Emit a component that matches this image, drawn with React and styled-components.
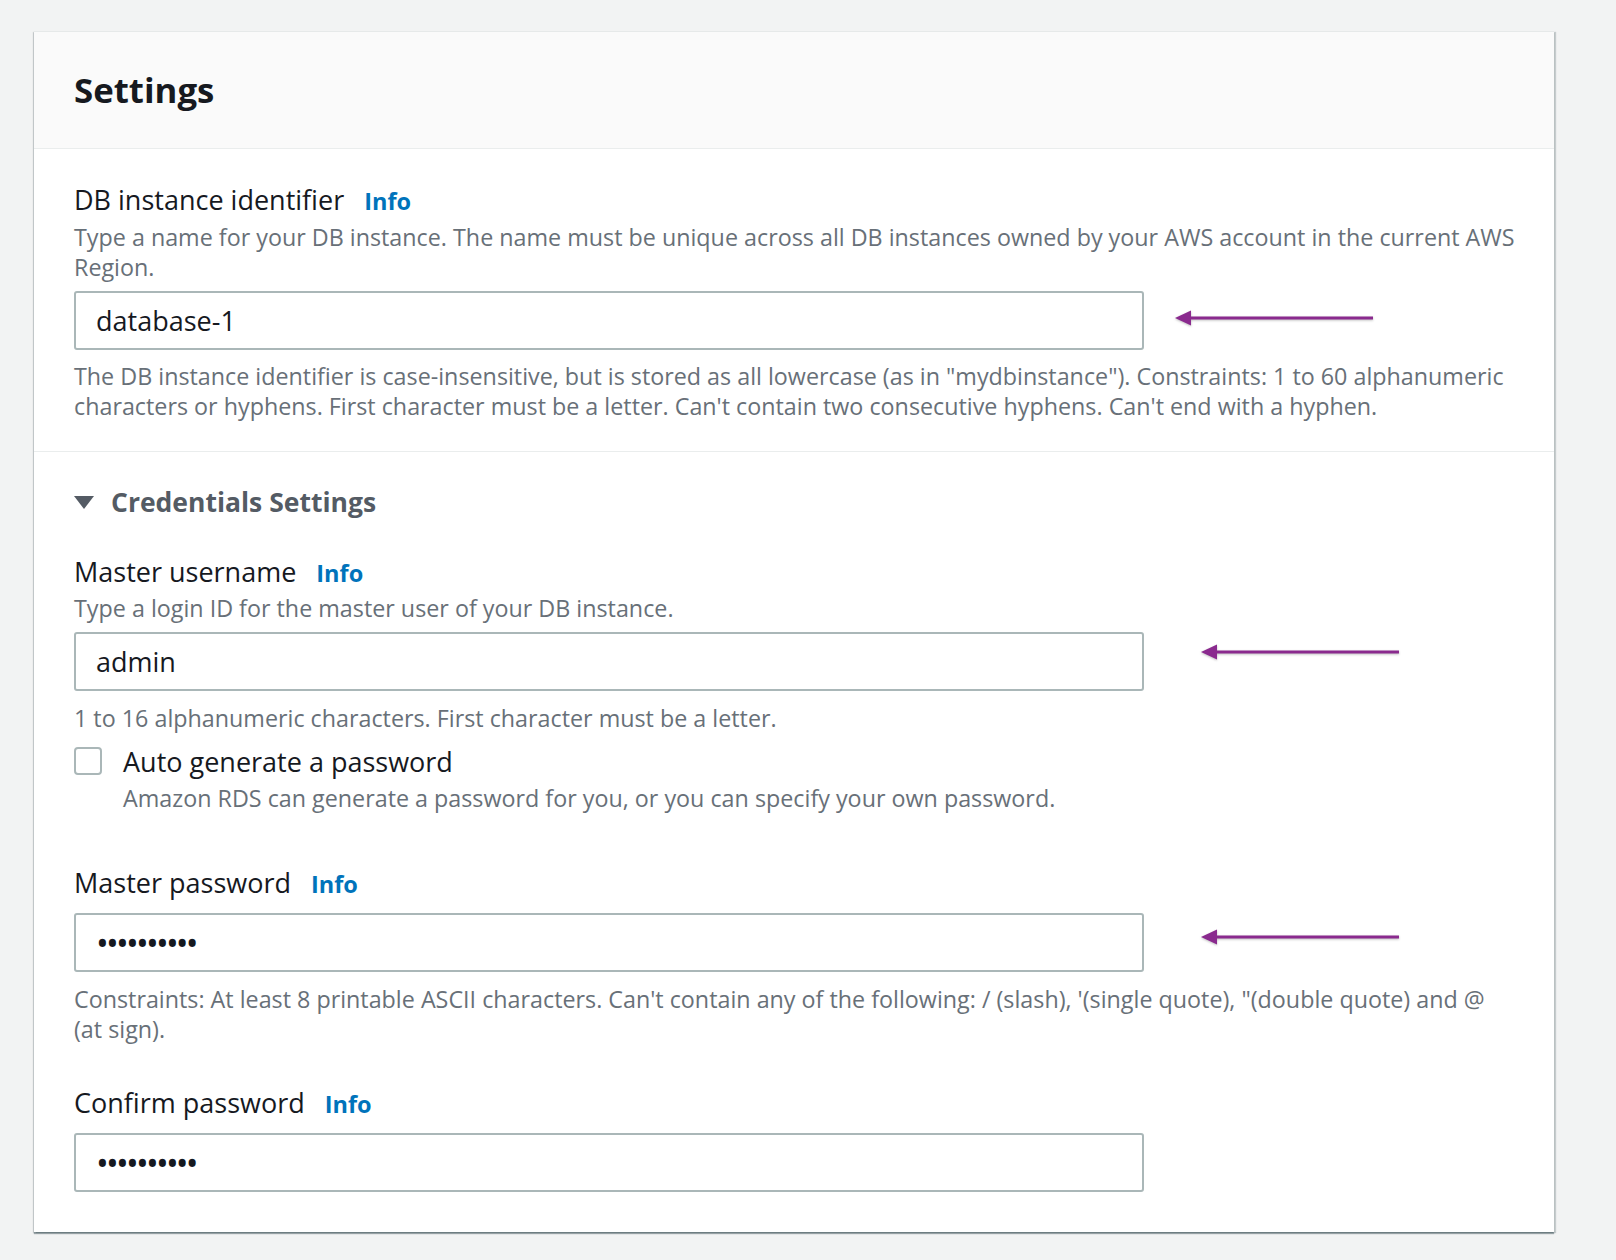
import React from "react"
import styled, { createGlobalStyle } from "styled-components"

const GlobalStyle = createGlobalStyle`
  body {
    margin: 0;
    background: #f2f3f3;
    font-family: "Open Sans", "Noto Sans", sans-serif;
    color: #16191f;
  }
`

const Arrow = ({ left, lift }) => (
  <ArrowSvg width="200" height="20" viewBox="0 0 200 20" $left={left} $lift={lift}>
    <line x1="13" y1="10" x2="198" y2="10" stroke="#8a2a8e" strokeWidth="3" />
    <polygon points="0,10 16,2.5 16,17.5" fill="#8a2a8e" />
  </ArrowSvg>
)

const Field = ({ label, description, value, hint, arrow, secret, mt }) => (
  <React.Fragment>
    <LabelRow $mt={mt}>
      <Label>{label}</Label>
      <Info href="#">Info</Info>
    </LabelRow>
    {description && <Description $mt={3}>{description}</Description>}
    <InputRow $mt={description ? 9 : 12}>
      <Input readOnly value={value} $secret={secret} />
      {arrow && <Arrow left={arrow.left} lift={arrow.lift} />}
    </InputRow>
    {hint && <Description $mt={12}>{hint}</Description>}
  </React.Fragment>
)

const App = () => (
  <React.Fragment>
    <GlobalStyle />
    <Page>
      <Card>
        <Header>
          <Title>Settings</Title>
        </Header>

        <Section $pad="34px 31px 30px 40px" $divider>
          <LabelRow>
            <Label>DB instance identifier</Label>
            <Info href="#">Info</Info>
          </LabelRow>
          <Description $mt={4}>
            Type a name for your DB instance. The name must be unique across all DB instances owned by your AWS
            account in the current AWS Region.
          </Description>
          <InputRow $mt={9}>
            <Input readOnly value="database-1" />
            <Arrow left={31} lift={6} />
          </InputRow>
          <Description $mt={11}>
            The DB instance identifier is case-insensitive, but is stored as all lowercase (as in "mydbinstance").
            Constraints: 1 to 60 alphanumeric characters or hyphens. First character must be a letter. Can't
            contain two consecutive hyphens. Can't end with a hyphen.
          </Description>
        </Section>

        <Section $pad="33px 31px 40px 40px">
          <Toggle>
            <Caret width="20" height="13" viewBox="0 0 20 13">
              <polygon points="0,0 20,0 10,13" fill="#545b64" />
            </Caret>
            <SubTitle>Credentials Settings</SubTitle>
          </Toggle>

          <Field
            mt={36}
            label="Master username"
            description="Type a login ID for the master user of your DB instance."
            value="admin"
            hint="1 to 16 alphanumeric characters. First character must be a letter."
            arrow={{ left: 57, lift: 20 }}
          />

          <CheckRow>
            <Box />
            <div>
              <CheckLabel>Auto generate a password</CheckLabel>
              <Description $mt={4}>
                Amazon RDS can generate a password for you, or you can specify your own password.
              </Description>
            </div>
          </CheckRow>

          <Field
            mt={53}
            label="Master password"
            value="••••••••••"
            secret
            hint={`Constraints: At least 8 printable ASCII characters. Can't contain any of the following: / (slash), '(single quote), "(double quote) and @ (at\u00a0sign).`}
            arrow={{ left: 57, lift: 11 }}
          />

          <Field mt={42} label="Confirm password" value="••••••••••" secret />
        </Section>
      </Card>
    </Page>
  </React.Fragment>
)

const Page = styled.div`
  padding: 31px 0 40px 34px;
`

const Card = styled.div`
  width: 1520px;
  background: #fff;
  border-top: 1px solid #e6e9e9;
  box-shadow: 0 2px 1px 0 rgba(0, 28, 36, 0.35), 2px 1px 1px 0 rgba(0, 28, 36, 0.18),
    -1px 1px 1px 0 rgba(0, 28, 36, 0.15);
`

const Header = styled.div`
  height: 116px;
  display: flex;
  align-items: center;
  padding: 0 40px;
  background: #fafafa;
  border-bottom: 1px solid #eaeded;
`

const Title = styled.h2`
  margin: 0;
  font-size: 34.8px;
  font-weight: 700;
  line-height: 40px;
  color: #16191f;
`

const Section = styled.div`
  padding: ${p => p.$pad};
  border-bottom: ${p => (p.$divider ? "1px solid #eaeded" : "none")};
`

const LabelRow = styled.div`
  display: flex;
  align-items: baseline;
  gap: 20px;
  margin-top: ${p => p.$mt || 0}px;
  line-height: 34px;
`

const Label = styled.span`
  font-size: 27px;
  color: #16191f;
`

const Info = styled.a`
  font-size: 23.5px;
  font-weight: 700;
  color: #0073bb;
  text-decoration: none;
`

const Description = styled.div`
  margin-top: ${p => p.$mt || 0}px;
  font-size: 23.3px;
  line-height: 30px;
  color: #687078;
`

const InputRow = styled.div`
  display: flex;
  align-items: center;
  margin-top: ${p => p.$mt || 0}px;
`

const Input = styled.input`
  box-sizing: border-box;
  width: 1070px;
  height: 59px;
  padding: 0 20px;
  border: 2px solid #aab7b8;
  border-radius: 3px;
  font-family: inherit;
  font-size: ${p => (p.$secret ? "34px" : "27px")};
  letter-spacing: ${p => (p.$secret ? "-2.8px" : "0")};
  color: #16191f;
  background: #fff;
  outline: none;
`

const ArrowSvg = styled.svg`
  flex: none;
  margin-left: ${p => p.$left}px;
  margin-bottom: ${p => p.$lift}px;
  filter: drop-shadow(0 1.5px 1px rgba(0, 0, 0, 0.25));
`

const Toggle = styled.div`
  display: flex;
  align-items: center;
  gap: 17px;
  line-height: 34px;
`

const Caret = styled.svg`
  flex: none;
`

const SubTitle = styled.h3`
  margin: 0;
  font-size: 26.5px;
  font-weight: 700;
  color: #545b64;
`

const CheckRow = styled.div`
  display: flex;
  align-items: flex-start;
  gap: 21px;
  margin-top: 12px;
`

const Box = styled.span`
  flex: none;
  box-sizing: border-box;
  width: 28px;
  height: 28px;
  margin-top: 2px;
  border: 2px solid #aab7b8;
  border-radius: 4px;
  background: #fff;
`

const CheckLabel = styled.div`
  font-size: 27px;
  line-height: 34px;
  color: #16191f;
`

export default App
